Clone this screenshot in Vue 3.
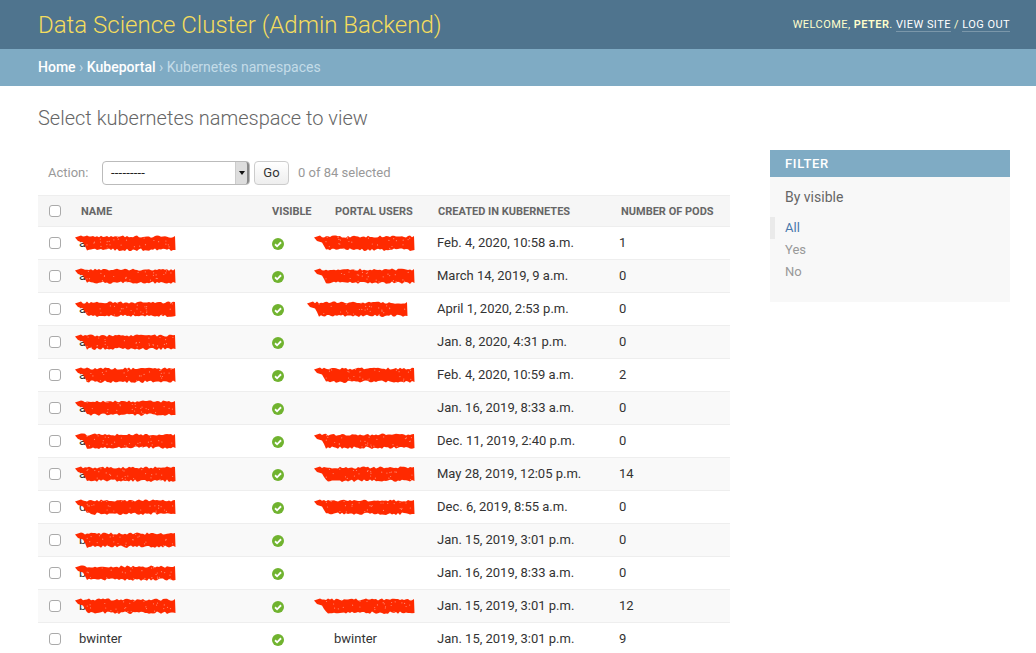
<template>
  <div class="page">
    <header class="topbar">
      <h1 class="brand">Data Science Cluster (Admin Backend)</h1>
      <div class="tools">
        WELCOME, <strong>PETER</strong>.
        <a href="#">VIEW SITE</a> / <a href="#">LOG OUT</a>
      </div>
    </header>

    <nav class="crumbs">
      <a href="#">Home</a> › <a href="#">Kubeportal</a> › Kubernetes namespaces
    </nav>

    <div class="content">
      <h2 class="title">Select kubernetes namespace to view</h2>

      <div class="columns">
        <main class="changelist">
          <div class="actions">
            <label class="action-label">Action:</label>
            <div class="select">
              <span class="select-value">---------</span>
              <span class="select-arrow"></span>
            </div>
            <button class="go">Go</button>
            <span class="counter">0 of 84 selected</span>
          </div>

          <table class="results">
            <colgroup>
              <col class="c-check" />
              <col class="c-name" />
              <col class="c-visible" />
              <col class="c-users" />
              <col class="c-created" />
              <col />
            </colgroup>
            <thead>
              <tr>
                <th class="check"><input type="checkbox" /></th>
                <th class="th-name">NAME</th>
                <th>VISIBLE</th>
                <th class="th-users">PORTAL USERS</th>
                <th class="th-created">CREATED IN KUBERNETES</th>
                <th class="th-pods">NUMBER OF PODS</th>
              </tr>
            </thead>
            <tbody>
              <tr v-for="row in rows" :key="row.id">
                <td class="check"><input type="checkbox" /></td>
                <td class="cell">
                  {{ row.name }}
                  <svg v-if="row.namePath" class="scribble" width="104" height="20" viewBox="0 0 104 20">
                    <path :d="row.namePath" fill="#ff2a00" />
                    <circle v-for="s in row.nameSpecks" :key="s.k" :cx="s.x" :cy="s.y" r="0.6" fill="#ff8a70" />
                  </svg>
                </td>
                <td>
                  <svg class="tick" width="12" height="12" viewBox="0 0 13 13">
                    <circle cx="6.5" cy="6.5" r="6.5" fill="#70b32f" />
                    <path d="M3.3 6.8 5.5 9 9.8 4.6" fill="none" stroke="#fff" stroke-width="2" />
                  </svg>
                </td>
                <td class="cell">
                  {{ row.users }}
                  <svg
                    v-if="row.usersPath"
                    class="scribble users"
                    :class="{ shifted: row.shifted }"
                    width="104"
                    height="20"
                    viewBox="0 0 104 20"
                  >
                    <path :d="row.usersPath" fill="#ff2a00" />
                    <circle v-for="s in row.userSpecks" :key="s.k" :cx="s.x" :cy="s.y" r="0.6" fill="#ff8a70" />
                  </svg>
                </td>
                <td>{{ row.created }}</td>
                <td>{{ row.pods }}</td>
              </tr>
            </tbody>
          </table>
        </main>

        <aside class="filter">
          <h3 class="filter-head">FILTER</h3>
          <h4 class="filter-by">By visible</h4>
          <ul class="filter-list">
            <li class="selected"><a href="#">All</a></li>
            <li><a href="#">Yes</a></li>
            <li><a href="#">No</a></li>
          </ul>
        </aside>
      </div>
    </div>
  </div>
</template>

<script setup>
/* small seeded random so the scribbles stay the same on every load */
function rng(seed) {
  let s = seed
  return () => {
    s = (s * 16807) % 2147483647
    return s / 2147483647
  }
}

function scribblePath(seed) {
  const r = rng(seed)
  const top = []
  const bottom = []
  for (let x = 6; x <= 99; x += 2) {
    top.push(`${x} ${(2.5 + r() * 2.2).toFixed(1)}`)
    if (x >= 11) bottom.push(`${x} ${(15.4 + r() * 2.6).toFixed(1)}`)
  }
  return `M0 4.5 L${top.join(' L')} L100 3 L100.5 17 L${bottom.reverse().join(' L')} L10 13 L8 9.5 L3 8 Z`
}

function specks(seed) {
  const r = rng(seed)
  return Array.from({ length: 26 }, (_, k) => ({
    k,
    x: (12 + r() * 86).toFixed(1),
    y: (4 + r() * 12).toFixed(1),
  }))
}

const data = [
  ['a', 'Feb. 4, 2020, 10:58 a.m.', 1, true],
  ['a', 'March 14, 2019, 9 a.m.', 0, true],
  ['a', 'April 1, 2020, 2:53 p.m.', 0, true, true],
  ['a', 'Jan. 8, 2020, 4:31 p.m.', 0, false],
  ['ap', 'Feb. 4, 2020, 10:59 a.m.', 2, true],
  ['a', 'Jan. 16, 2019, 8:33 a.m.', 0, false],
  ['a', 'Dec. 11, 2019, 2:40 p.m.', 0, true],
  ['a', 'May 28, 2019, 12:05 p.m.', 14, true],
  ['d', 'Dec. 6, 2019, 8:55 a.m.', 0, true],
  ['b', 'Jan. 15, 2019, 3:01 p.m.', 0, false],
  ['b', 'Jan. 16, 2019, 8:33 a.m.', 0, false],
  ['b', 'Jan. 15, 2019, 3:01 p.m.', 12, true],
]

const rows = data.map(([name, created, pods, hasUsers, shifted], i) => ({
  id: i,
  name,
  created,
  pods,
  users: '',
  shifted,
  namePath: scribblePath(i * 97 + 11),
  nameSpecks: specks(i * 31 + 5),
  usersPath: hasUsers ? scribblePath(i * 53 + 29) : null,
  userSpecks: hasUsers ? specks(i * 71 + 3) : [],
}))

rows.push({
  id: 99,
  name: 'bwinter',
  created: 'Jan. 15, 2019, 3:01 p.m.',
  pods: 9,
  users: 'bwinter',
})
</script>

<style>
html,
body {
  margin: 0;
  overflow: hidden;
  background: #fff;
}
</style>

<style scoped>
.page {
  width: 1036px;
  height: 653px;
  overflow: hidden;
  font-family: Roboto, "Liberation Sans", sans-serif;
  font-size: 13px;
  color: #333;
}

.topbar {
  height: 49px;
  box-sizing: border-box;
  padding: 0 26px 0 38px;
  background: #4f748e;
  display: flex;
  align-items: center;
  justify-content: space-between;
}

.brand {
  margin: 0;
  font-size: 24px;
  font-weight: 300;
  color: #f5dd5d;
}

.tools {
  font-size: 11px;
  letter-spacing: 0.45px;
  font-weight: 400;
  color: #ffc;
}

.tools strong {
  font-weight: 600;
}

.tools a {
  color: #fff;
  text-decoration: none;
  border-bottom: 1px solid rgba(255, 255, 255, 0.25);
}

.crumbs {
  height: 37px;
  box-sizing: border-box;
  padding: 0 38px 2px;
  display: flex;
  align-items: center;
  gap: 3.5px;
  background: #7fabc4;
  font-size: 14px;
  font-weight: 400;
  color: #c4dce8;
}

.crumbs a {
  color: #fff;
  font-weight: 500;
  text-decoration: none;
}

.content {
  padding: 20px 26px 0 38px;
}

.title {
  margin: 0;
  height: 24px;
  line-height: 24px;
  font-size: 20px;
  font-weight: 300;
  color: #666;
}

.columns {
  display: flex;
  align-items: flex-start;
  gap: 40px;
  margin-top: 20px;
}

.changelist {
  width: 692px;
  flex: none;
}

.actions {
  height: 24px;
  padding: 11px 0 10px 10px;
  display: flex;
  align-items: center;
  color: #999;
  font-size: 13px;
}

.action-label {
  width: 54px;
  padding-bottom: 2px;
}

.select {
  width: 148px;
  height: 24px;
  box-sizing: border-box;
  display: flex;
  align-items: center;
  justify-content: space-between;
  border: 1px solid #bbb;
  border-radius: 4px;
  background: #fff;
  color: #222;
  font-size: 13px;
}

.select-value {
  padding-left: 8px;
  padding-bottom: 1px;
  letter-spacing: 0.2px;
}

.select-arrow {
  width: 14px;
  height: 22px;
  box-sizing: border-box;
  background: #ddd;
  border-left: 1px solid #ccc;
  border-right: 2px solid #888;
  border-radius: 0 3px 3px 0;
  display: flex;
  align-items: center;
  justify-content: center;
}

.select-arrow::after {
  content: "";
  border-left: 3px solid transparent;
  border-right: 3px solid transparent;
  border-top: 4px solid #111;
}

.go {
  width: 35px;
  height: 24px;
  margin-left: 4px;
  padding: 0 0 1px;
  border: 1px solid #ccc;
  border-radius: 4px;
  background: linear-gradient(#fff, #eee);
  font-family: inherit;
  font-size: 13px;
  color: #333;
}

.counter {
  margin-left: 9px;
  padding-bottom: 2px;
}

.results {
  width: 692px;
  table-layout: fixed;
  border-collapse: collapse;
}

.c-check {
  width: 31px;
}

.c-name {
  width: 193px;
}

.c-visible {
  width: 62px;
}

.c-users {
  width: 103px;
}

.c-created {
  width: 182px;
}

th {
  height: 31px;
  padding: 0 0 0 10px;
  background: #f6f6f6;
  border-top: 1px solid #eee;
  border-bottom: 1px solid #eee;
  box-sizing: border-box;
  text-align: left;
  font-size: 11px;
  font-weight: 700;
  color: #666;
}

.th-name {
  padding-left: 12px;
}

.th-users {
  padding-left: 11px;
}

.th-created {
  padding-left: 11px;
}

.th-pods {
  padding-left: 12px;
}

td {
  height: 33px;
  padding: 0 0 1px 10px;
  box-sizing: border-box;
  border-bottom: 1px solid #eee;
  font-size: 13px;
  color: #333;
}

tbody tr:nth-child(even) td {
  background: #f9f9f9;
}

.check {
  padding-left: 11px;
}

input[type="checkbox"] {
  appearance: none;
  display: block;
  width: 12px;
  height: 12px;
  margin: 0;
  background: #fff;
  border: 1px solid #aaa;
  border-radius: 3px;
  box-sizing: border-box;
}

.cell {
  position: relative;
}

.scribble {
  position: absolute;
  left: 6px;
  top: 6px;
  filter: blur(0.3px);
}

.scribble.users {
  left: -10px;
}

.scribble.users.shifted {
  left: -17px;
}

.tick {
  display: block;
  margin-top: 2px;
}

.filter {
  width: 240px;
  flex: none;
  height: 152px;
  background: #f8f8f8;
  color: #666;
}

.filter-head {
  margin: 0;
  height: 27px;
  line-height: 27px;
  padding-left: 15px;
  background: #7fabc4;
  font-size: 13px;
  font-weight: 500;
  letter-spacing: 0.7px;
  color: #fff;
}

.filter-by {
  margin: 0;
  padding: 12px 15px 0;
  line-height: 16px;
  font-size: 14px;
  font-weight: 400;
  color: #666;
}

.filter-list {
  list-style: none;
  margin: 12px 0 0;
  padding: 0;
}

.filter-list li {
  height: 22px;
  line-height: 22px;
  padding-left: 15px;
}

.filter-list a {
  color: #999;
  text-decoration: none;
}

.filter-list .selected {
  padding-left: 10px;
  border-left: 5px solid #eaeaea;
}

.filter-list .selected a {
  color: #4a78ad;
}
</style>
